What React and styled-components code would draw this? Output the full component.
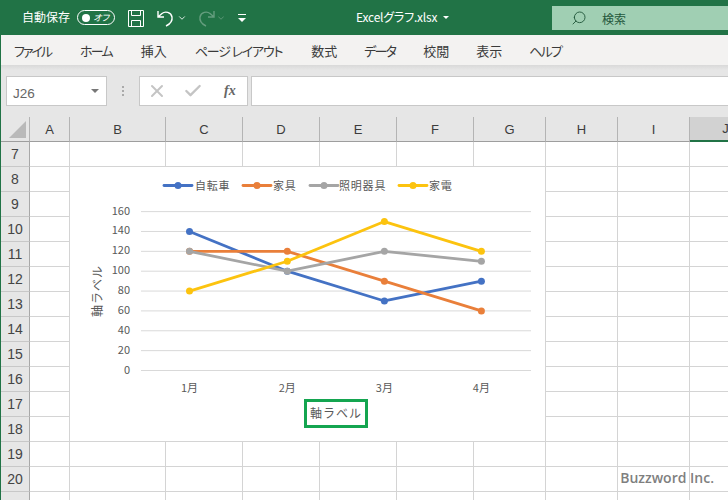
import React from "react";
import styled, { createGlobalStyle } from "styled-components";
import { ChevronDown, Search, X, Check } from "lucide-react";

const uiFont = `"Noto Sans CJK JP", "Liberation Sans", sans-serif`;

const GlobalStyle = createGlobalStyle`
  html, body {
    margin: 0;
    padding: 0;
    background: #fff;
  }
  * {
    box-sizing: border-box;
  }
`;

const Window = styled.div`
  width: 728px;
  height: 500px;
  overflow: hidden;
  display: flex;
  flex-direction: column;
  border-left: 1px solid #217346;
  font-family: ${uiFont};
  font-feature-settings: "palt";
`;

const TitleBar = styled.div`
  height: 35px;
  margin-left: -1px;
  background: #217346;
  color: #fff;
  display: flex;
  align-items: flex-start;
  flex: none;
`;

const AutoSave = styled.span`
  margin-left: 22px;
  margin-top: 8px;
  font-size: 12px;
  line-height: 18px;
  width: 55px;
`;

const Toggle = styled.div`
  width: 38px;
  height: 15px;
  margin-top: 10px;
  border: 1px solid #fff;
  border-radius: 8px;
  display: flex;
  align-items: center;
  padding: 0 5px 0 4px;
  justify-content: space-between;
  font-size: 9px;
  font-style: italic;
  &::before {
    content: "";
    width: 8px;
    height: 8px;
    border-radius: 50%;
    background: #fff;
  }
`;

const QuickIcon = styled.svg`
  flex: none;
  margin-top: ${(props) => props.$top || 10}px;
  margin-left: ${(props) => props.$left || 0}px;
  opacity: ${(props) => (props.$faded ? 0.3 : 1)};
`;

const QuickCaret = styled(ChevronDown)`
  flex: none;
  margin-top: 13px;
  margin-left: ${(props) => props.$left}px;
  opacity: ${(props) => (props.$faded ? 0.3 : 1)};
`;

const FileName = styled.div`
  margin-left: 109px;
  width: 87px;
  margin-top: 8px;
  font-size: 12px;
  line-height: 18px;
  letter-spacing: -0.2px;
  white-space: nowrap;
`;

const TitleCaret = styled.span`
  width: 0;
  height: 0;
  margin-top: 16px;
  border: 3px solid transparent;
  border-top: 3px solid #fff;
`;

const SearchBox = styled.div`
  margin-left: 103px;
  margin-top: 6px;
  flex: 1;
  height: 24px;
  background: #a0cfb3;
  color: #24583c;
  display: flex;
  align-items: center;
  padding-left: 19px;
  gap: 15px;
  font-size: 12px;
`;

const RibbonTabs = styled.nav`
  height: 30px;
  flex: none;
  background: #f3f2f1;
  display: flex;
  align-items: center;
  gap: 27px;
  padding-left: 13px;
  font-size: 13px;
  color: #3a3a3a;
`;

const RibbonTab = styled.span`
  letter-spacing: ${(props) => props.$spacing || 0}px;
  margin-right: ${(props) => props.$after || 0}px;
`;

const FormulaArea = styled.div`
  height: 52px;
  flex: none;
  background: linear-gradient(#d9d9d9, #e6e6e6 5px);
  padding: 11px 0 11px 5px;
  display: flex;
  align-items: stretch;
`;

const NameBox = styled.div`
  width: 101px;
  background: #fff;
  border: 1px solid #c8c8c8;
  display: flex;
  align-items: center;
  justify-content: space-between;
  padding: 0 7px 0 6px;
  font-family: "Liberation Sans", sans-serif;
  font-size: 13.5px;
  color: #666;
`;

const NameText = styled.span`
  padding-top: 4px;
`;

const DownCaret = styled.span`
  width: 0;
  height: 0;
  margin-top: 3px;
  border: 4px solid transparent;
  border-top: 4px solid #777;
`;

const Dots = styled.div`
  width: 32px;
  display: flex;
  flex-direction: column;
  align-items: center;
  justify-content: center;
  gap: 2px;
  span {
    width: 2px;
    height: 2px;
    background: #aaa;
  }
`;

const FormulaButtons = styled.div`
  width: 109px;
  background: #fff;
  border: 1px solid #c8c8c8;
  display: flex;
  align-items: center;
  padding-left: 7px;
  gap: 16px;
  color: #c4c4c4;
`;

const FxLabel = styled.span`
  font-family: "Liberation Serif", serif;
  font-style: italic;
  font-weight: 700;
  font-size: 14px;
  margin-left: 5px;
  color: #666;
`;

const FormulaInput = styled.div`
  flex: 1;
  margin-left: 3px;
  background: #fff;
  border: 1px solid #c8c8c8;
  border-right: 0;
`;

const Sheet = styled.div`
  position: relative;
  flex: 1;
  min-height: 0;
  overflow: hidden;
  display: grid;
  grid-template-columns: 29px 40px 96px 77px 77px 77px 77px 72px 72px 72px 72px;
  grid-template-rows: 25px;
  grid-auto-rows: 25px;
  font-family: "Liberation Sans", sans-serif;
`;

const Corner = styled.div`
  background: #e6e6e6;
  border-right: 1px solid #b4b4b4;
  border-bottom: 1px solid #9e9e9e;
  position: relative;
  &::after {
    content: "";
    position: absolute;
    right: 3px;
    bottom: 3px;
    border-style: solid;
    border-width: 0 0 17px 17px;
    border-color: transparent transparent #b9b9b9 transparent;
  }
`;

const ColHead = styled.div`
  background: ${(props) => (props.$active ? "#d2d2d2" : "#e6e6e6")};
  border-right: 1px solid #b4b4b4;
  border-bottom: ${(props) => (props.$active ? "2px solid #217346" : "1px solid #9e9e9e")};
  display: flex;
  align-items: center;
  justify-content: center;
  font-size: 13px;
  color: #3c3c3c;
`;

const RowHead = styled.div`
  background: #e6e6e6;
  border-right: 1px solid #a8a8a8;
  border-bottom: 1px solid #c8c8c8;
  display: flex;
  align-items: center;
  justify-content: center;
  font-size: 14px;
  color: #444;
`;

const Cell = styled.div`
  background: #fff;
  border-right: 1px solid #d4d4d4;
  border-bottom: 1px solid #d4d4d4;
`;

const ChartFrame = styled.svg`
  position: absolute;
  left: 69px;
  top: 50px;
  display: block;
  background: #fff;
`;

const ChartText = styled.text`
  font-family: ${uiFont};
  font-feature-settings: "palt";
  font-size: 11px;
  fill: #595959;
`;

const LegendText = styled(ChartText)`
  letter-spacing: 0.8px;
`;

const AxisTitle = styled(ChartText)`
  font-feature-settings: normal;
  font-size: 12px;
  letter-spacing: 1px;
`;

const Watermark = styled.div`
  position: absolute;
  right: 14px;
  bottom: 13px;
  font-family: "Open Sans", sans-serif;
  font-weight: 600;
  font-size: 14px;
  color: #7f7f7f;
`;

const tabs = [
  { label: "ファイル", spacing: -2, after: 2 },
  { label: "ホーム", spacing: -1.8, after: 2 },
  { label: "挿入", after: 1 },
  { label: "ページ レイアウト", spacing: -1.2, after: 2 },
  { label: "数式" },
  { label: "データ", spacing: -1.8, after: 1 },
  { label: "校閲" },
  { label: "表示" },
  { label: "ヘルプ", spacing: -1.8 },
];
const columns = ["A", "B", "C", "D", "E", "F", "G", "H", "I", "J"];
const rows = [7, 8, 9, 10, 11, 12, 13, 14, 15, 16, 17, 18, 19, 20, ""];

const months = ["1月", "2月", "3月", "4月"];
const monthX = [189.5, 287.3, 384.4, 481.4];
const ticks = [0, 20, 40, 60, 80, 100, 120, 140, 160];
const valueY = (v) => 370.5 - v * 0.993;

const series = [
  { name: "自転車", color: "#4472c4", values: [140, 100, 70, 90], keyX: 164, textX: 195 },
  { name: "家具", color: "#e97f3a", values: [120, 120, 90, 60], keyX: 243, textX: 273 },
  { name: "照明器具", color: "#a5a5a5", values: [120, 100, 120, 110], keyX: 310, textX: 339 },
  { name: "家電", color: "#fcc30f", values: [80, 110, 150, 120], keyX: 399, textX: 429 },
];

const Chart = () => (
  <ChartFrame width="475" height="274" viewBox="70 167 475 274">
    {ticks.map((t) => (
      <g key={t}>
        <line x1="141" x2="531" y1={valueY(t)} y2={valueY(t)} stroke="#d9d9d9" strokeWidth="1" />
        <ChartText x="130" y={valueY(t) + 3} textAnchor="end">{t}</ChartText>
      </g>
    ))}
    {months.map((m, i) => (
      <ChartText key={m} x={monthX[i]} y="392" textAnchor="middle">{m}</ChartText>
    ))}
    {series.map((s) => (
      <g key={s.name}>
        <polyline
          points={s.values.map((v, i) => `${monthX[i]},${valueY(v)}`).join(" ")}
          fill="none"
          stroke={s.color}
          strokeWidth="2.8"
          strokeLinejoin="round"
          strokeLinecap="round"
        />
        {s.values.map((v, i) => (
          <circle key={i} cx={monthX[i]} cy={valueY(v)} r="3.5" fill={s.color} />
        ))}
        <line x1={s.keyX} x2={s.keyX + 28} y1="185.5" y2="185.5" stroke={s.color} strokeWidth="2.8" strokeLinecap="round" />
        <circle cx={s.keyX + 14} cy="185.5" r="3.5" fill={s.color} />
        <LegendText x={s.textX} y="189.5">{s.name}</LegendText>
      </g>
    ))}
    <AxisTitle transform="translate(102 291) rotate(-90)" textAnchor="middle">軸ラベル</AxisTitle>
    <rect x="305.5" y="400.5" width="61" height="26" fill="#fff" stroke="#14a550" strokeWidth="3" />
    <AxisTitle x="336" y="418" textAnchor="middle">軸ラベル</AxisTitle>
  </ChartFrame>
);

const App = () => (
  <Window>
    <GlobalStyle />
    <TitleBar>
      <AutoSave>自動保存</AutoSave>
      <Toggle>オフ</Toggle>
      <QuickIcon $left={13} width="16" height="17" viewBox="0 0 16 17" fill="none" stroke="#fff" strokeWidth="1">
        <path d="M.5.5h15v16H.5z" />
        <path d="M3.500.5v5h9v-5M3.500 16.500v-6h9v6" />
      </QuickIcon>
      <QuickIcon $left={13} width="17" height="17" viewBox="0 0 17 17" fill="none" stroke="#fff" strokeWidth="1.4">
        <path d="M1 1v6h6M1.500 6.500 5 3.500C8 1 14 2 15 7c.6 3.500-2 7-6 9" />
      </QuickIcon>
      <QuickCaret size={10} color="#fff" strokeWidth={2} $left={3} />
      <QuickIcon $left={11} $faded width="17" height="17" viewBox="0 0 17 17" fill="none" stroke="#fff" strokeWidth="1.4">
        <path d="M16 1v6h-6M15.500 6.500 12 3.500C9 1 3 2 2 7c-.6 3.500 2 7 6 9" />
      </QuickIcon>
      <QuickCaret size={10} color="#fff" strokeWidth={2} $left={1} $faded />
      <QuickIcon $left={11} $top={14} width="10" height="9" viewBox="0 0 10 9" fill="#fff" stroke="none">
        <path d="M1 0h8v1H1zM1 4h8L5 8z" />
      </QuickIcon>
      <FileName>Excelグラフ.xlsx</FileName>
      <TitleCaret />
      <SearchBox>
        <Search size={16} strokeWidth={1.4} style={{ transform: "scaleX(-1)" }} />
        検索
      </SearchBox>
    </TitleBar>
    <RibbonTabs>
      {tabs.map((t) => (
        <RibbonTab key={t.label} $spacing={t.spacing} $after={t.after}>{t.label}</RibbonTab>
      ))}
    </RibbonTabs>
    <FormulaArea>
      <NameBox>
        <NameText>J26</NameText>
        <DownCaret />
      </NameBox>
      <Dots>
        <span />
        <span />
        <span />
      </Dots>
      <FormulaButtons>
        <X size={20} strokeWidth={2.4} />
        <Check size={20} strokeWidth={2.8} />
        <FxLabel>fx</FxLabel>
      </FormulaButtons>
      <FormulaInput />
    </FormulaArea>
    <Sheet>
      <Corner />
      {columns.map((c) => (
        <ColHead key={c} $active={c === "J"}>{c}</ColHead>
      ))}
      {rows.map((r, i) => (
        <React.Fragment key={i}>
          <RowHead>{r}</RowHead>
          {columns.map((c) => (
            <Cell key={c} />
          ))}
        </React.Fragment>
      ))}
      <Chart />
      <Watermark>Buzzword Inc.</Watermark>
    </Sheet>
  </Window>
);

export default App;
